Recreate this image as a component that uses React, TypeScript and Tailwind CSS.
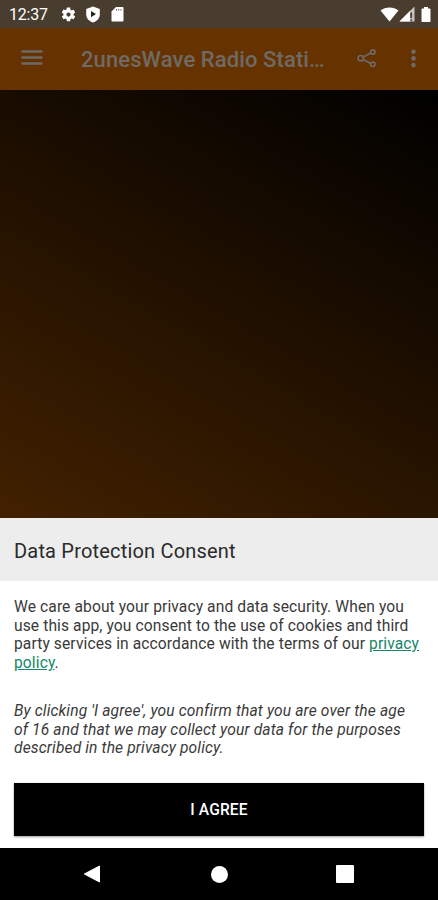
import React from "react";

function StatusBar() {
  return (
    <div className="flex h-7 items-center bg-[#483d2f] pl-[9px] pr-[7px] text-white">
      <span className="w-[40px] pt-px text-[16px] leading-none tracking-[-0.2px] whitespace-nowrap">12:37</span>
      {/* settings, play protect, sd card */}
      <svg className="ml-[11px]" width="17" height="17" viewBox="0 0 24 24" fill="currentColor">
        <path d="M19.14 12.94c.04-.3.06-.61.06-.94s-.02-.64-.07-.94l2.03-1.58a.49.49 0 0 0 .12-.61l-1.92-3.32a.49.49 0 0 0-.59-.22l-2.39.96a7 7 0 0 0-1.62-.94l-.36-2.54A.48.48 0 0 0 13.92 2h-3.84a.47.47 0 0 0-.47.41l-.36 2.54c-.59.24-1.13.57-1.62.94l-2.39-.96a.47.47 0 0 0-.59.22L2.74 8.87a.47.47 0 0 0 .12.61l2.03 1.58a6 6 0 0 0-.02 1.88l-2.03 1.58a.49.49 0 0 0-.12.61l1.92 3.32c.12.22.37.29.59.22l2.39-.96c.5.38 1.03.7 1.62.94l.36 2.54c.05.24.24.41.48.41h3.84c.24 0 .44-.17.47-.41l.36-2.54c.59-.24 1.13-.56 1.62-.94l2.39.96c.22.08.47 0 .59-.22l1.92-3.32a.47.47 0 0 0-.12-.61zM12 15a3 3 0 1 1 0-6 3 3 0 0 1 0 6z" />
      </svg>
      <svg className="ml-[8px]" width="16" height="17" viewBox="0 0 16 17">
        <path d="M8 .5 14.800 3v5.400c0 3.600-2.700 6.700-6.800 8.100-4.100-1.400-6.800-4.500-6.800-8.100V3z" fill="currentColor" />
        <path d="M6 5v6.200L11 8.100z" fill="#2a241c" />
      </svg>
      <svg className="ml-[10px]" width="13" height="16" viewBox="0 0 13 16">
        <path d="M5 1h6.500c.6 0 1 .4 1 1v12.500c0 .6-.4 1-1 1h-10c-.6 0-1-.4-1-1V5.500z" fill="currentColor" />
        <path d="M5.500 3v1.600M7.700 3v1.600M9.900 3v1.600" stroke="#483d2f" strokeWidth=".8" />
      </svg>
      {/* wifi, signal, battery */}
      <svg className="ml-auto" width="19" height="15" viewBox="0 0 19 15">
        <path d="M9.500 14.500.500 3.500C3 1.600 6 .5 9.500.5s6.500 1.100 9 3z" fill="currentColor" />
      </svg>
      <svg width="16" height="16" viewBox="0 0 16 16">
        <path d="M15.500.5v15H.500z" fill="#c9c5c0" />
        <path d="M11 5v10.500H.500z" fill="currentColor" />
        <path d="M12.200 6.500v5.500M12.200 13.300v1.400" stroke="#483d2f" strokeWidth="1.800" />
      </svg>
      <svg className="ml-[6px]" width="10" height="17" viewBox="0 0 10 17">
        <path d="M3 1h4v1.500h1.500c.6 0 1 .4 1 1V15c0 .6-.4 1-1 1h-7c-.6 0-1-.4-1-1V3.500c0-.6.4-1 1-1H3z" fill="currentColor" />
      </svg>
    </div>
  );
}

function AppBar() {
  return (
    <div className="flex h-[62px] items-center bg-[#663300] pb-[2px] text-[#6e6a66]">
      <svg className="ml-[20px]" width="24" height="18" viewBox="0 0 24 18">
        <path d="M2.300 2.500h19.200M2.300 8.500h19.200M2.300 14.500h19.200" stroke="currentColor" strokeWidth="2.300" strokeLinecap="round" />
      </svg>
      <h1 className="ml-[37px] w-[250px] pt-[4px] text-[22px] font-medium leading-none tracking-[0.1px] whitespace-nowrap">
        2unesWave Radio Stati…
      </h1>
      <svg className="ml-[26px]" width="20" height="20" viewBox="0 0 20 20" fill="none" stroke="currentColor" strokeWidth="1.700">
        <circle cx="3.700" cy="10.200" r="2.700" />
        <circle cx="15.800" cy="4" r="2.200" />
        <circle cx="15.800" cy="16.300" r="2.200" />
        <path d="m6.200 9 7.600-4M6.200 11.400l7.600 4" />
      </svg>
      <svg className="ml-[33px]" width="8" height="20" viewBox="0 0 8 20" fill="currentColor">
        <circle cx="3.500" cy="3.700" r="2.300" />
        <circle cx="3.500" cy="10.400" r="2.300" />
        <circle cx="3.500" cy="17.100" r="2.300" />
      </svg>
    </div>
  );
}

function ConsentSheet() {
  return (
    <section className="h-[330px] bg-white text-[#3a3a3a]">
      <div className="flex h-[63px] items-center bg-[#ededed] px-[14px] pt-[2px]">
        <h2 className="text-[20px] leading-none tracking-[0.19px] text-[#2a2a2a] whitespace-nowrap">Data Protection Consent</h2>
      </div>
      <div className="px-[14px] pt-[17px] text-[15.600px] leading-[18.700px] whitespace-nowrap">
        <p className="tracking-[0.1px]">
          We care about your privacy and data security. When you
          <br />
          use this app, you consent to the use of cookies and third
          <br />
          party services in accordance with the terms of our{" "}
          <a className="text-[#178768] underline">privacy</a>
          <br />
          <a className="text-[#178768] underline">policy</a>.
        </p>
        <p className="mt-[29px] italic tracking-[0.135px]">
          By clicking 'I agree', you confirm that you are over the age
          <br />
          of 16 and that we may collect your data for the purposes
          <br />
          described in the privacy policy.
        </p>
        <button className="mt-[25px] block h-[53px] w-full bg-black pt-[2px] text-center text-[15.600px] font-medium tracking-[0.1px] text-white shadow-[0_1px_2px_rgba(0,0,0,0.4)]">
          I AGREE
        </button>
      </div>
    </section>
  );
}

function NavBar() {
  return (
    <div className="flex h-[52px] items-center bg-black text-white">
      <svg className="ml-[83px]" width="18" height="18" viewBox="0 0 18 18">
        <path d="M16.500 1v16L1.300 9z" fill="currentColor" stroke="currentColor" strokeWidth="1" strokeLinejoin="round" />
      </svg>
      <div className="ml-[110px] size-[17px] rounded-full bg-white" />
      <div className="ml-[108px] size-[18px] rounded-[1px] bg-white" />
    </div>
  );
}

export default function App() {
  return (
    <div className="flex h-[900px] w-[438px] flex-col overflow-hidden bg-black font-['Roboto',sans-serif]">
      <StatusBar />
      <AppBar />
      <div className="flex-1 bg-[linear-gradient(30deg,#422100,#000)]" />
      <ConsentSheet />
      <NavBar />
    </div>
  );
}
